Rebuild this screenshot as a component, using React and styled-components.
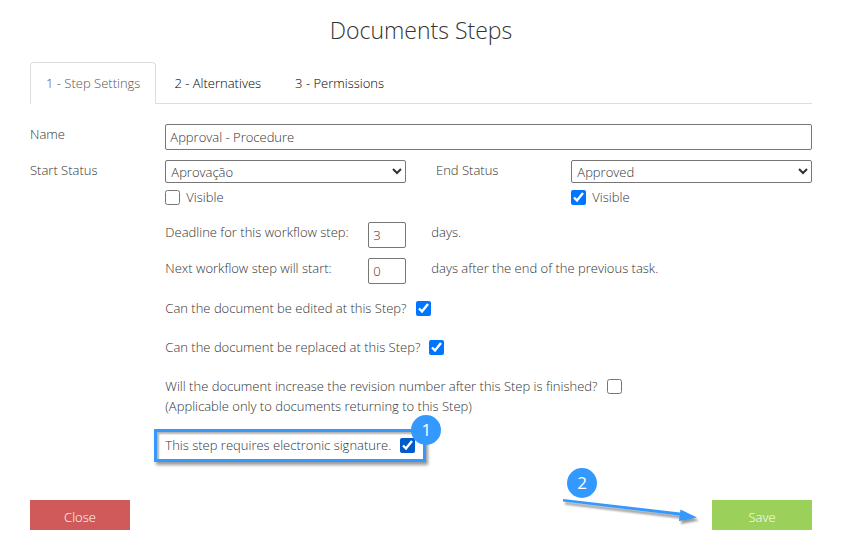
import React from "react";
import styled, { createGlobalStyle } from "styled-components";

const GlobalStyle = createGlobalStyle`
  * {
    box-sizing: border-box;
  }
  body {
    margin: 0;
    background: #fff;
    color: #333;
    font-family: "Open Sans", "Noto Sans", sans-serif;
    font-size: 13px;
    font-weight: 300;
    line-height: 20px;
  }
  input,
  select,
  button {
    font: inherit;
    color: inherit;
  }
`;

const tabs = ["1 - Step Settings", "2 - Alternatives", "3 - Permissions"];

const App = () => {
  return (
    <Page>
      <GlobalStyle />
      <Title>Documents Steps</Title>
      <Tabs>
        {tabs.map((tab, i) => (
          <Tab key={tab} href="#" $active={i === 0}>
            {tab}
          </Tab>
        ))}
      </Tabs>

      <Form>
        <Row>
          <Label htmlFor="name">Name</Label>
          <WideField>
            <TextInput id="name" defaultValue="Approval - Procedure" />
          </WideField>
        </Row>
        <Row>
          <Label htmlFor="start">Start Status</Label>
          <div>
            <Select id="start">
              <option>Aprovação</option>
            </Select>
            <CheckLabel>
              <Checkbox type="checkbox" />
              Visible
            </CheckLabel>
          </div>
          <Label htmlFor="end">End Status</Label>
          <div>
            <Select id="end">
              <option>Approved</option>
            </Select>
            <CheckLabel>
              <Checkbox type="checkbox" defaultChecked />
              Visible
            </CheckLabel>
          </div>
        </Row>
        <Row>
          <Options>
            <DaysRow>
              <Label htmlFor="deadline">Deadline for this workflow step:</Label>
              <TextInput id="deadline" defaultValue="3" />
              <span>days.</span>
            </DaysRow>
            <DaysRow>
              <Label htmlFor="next">Next workflow step will start:</Label>
              <TextInput id="next" defaultValue="0" />
              <span>days after the end of the previous task.</span>
            </DaysRow>
            <Questions>
              <Question>
                Can the document be edited at this Step?
                <Checkbox type="checkbox" defaultChecked />
              </Question>
              <Question>
                Can the document be replaced at this Step?
                <Checkbox type="checkbox" defaultChecked />
              </Question>
              <div>
                <Question>
                  Will the document increase the revision number after this Step
                  is finished?
                  <Checkbox type="checkbox" />
                </Question>
                <div>(Applicable only to documents returning to this Step)</div>
              </div>
              <Highlight>
                <Question>
                  This step requires electronic signature.
                  <Checkbox type="checkbox" defaultChecked $dark />
                </Question>
                <CornerBadge>1</CornerBadge>
              </Highlight>
            </Questions>
          </Options>
        </Row>
      </Form>

      <Footer>
        <Button $color="#d05a5a">Close</Button>
        <SaveBox>
          <Arrow width="150" height="40" viewBox="0 0 150 40">
            <path
              d="M1 9 L1 11.5 L117.500 25.500 L117 31 L135 27.500 L118.500 19.500 L118 22.500 Z"
              fill="#3399ff"
            />
          </Arrow>
          <ArrowBadge>2</ArrowBadge>
          <Button $color="#9bd15a">Save</Button>
        </SaveBox>
      </Footer>
    </Page>
  );
};

const Page = styled.main`
  padding: 12px 29px 13px 30px;
`;

const Title = styled.h1`
  margin: 0 0 14px;
  font-size: 23px;
  font-weight: 300;
  line-height: 36px;
  text-align: center;
`;

const Tabs = styled.nav`
  display: flex;
  gap: 2px;
  border-bottom: 1px solid #ddd;
`;

const Tab = styled.a`
  margin-bottom: -1px;
  padding: 10px 15px;
  border: 1px solid ${(p) => (p.$active ? "#ddd" : "transparent")};
  border-bottom-color: ${(p) => (p.$active ? "#fff" : "transparent")};
  border-radius: 4px 4px 0 0;
  color: ${(p) => (p.$active ? "#555" : "#000")};
  text-decoration: none;
`;

const Form = styled.form`
  display: grid;
  gap: 10px;
  padding-top: 20px;
`;

const Row = styled.div`
  display: grid;
  grid-template-columns: 2fr 4fr 2fr 4fr;
  margin-right: -30px;

  > * {
    margin-right: 30px;
    min-width: 0;
  }
`;

const Label = styled.label`
  color: #333;
`;

const WideField = styled.div`
  grid-column: 2 / -1;
`;

const TextInput = styled.input`
  display: block;
  width: 100%;
  height: 26px;
  padding: 2px 4px;
  border: 1px solid #767676;
  border-radius: 2px;
`;

const Select = styled.select`
  display: block;
  width: 100%;
  height: 23px;
  padding-left: 1px;
  border: 1px solid #767676;
  border-radius: 2px;
  background: #fff;
`;

const CheckLabel = styled.label`
  display: flex;
  align-items: center;
  gap: 6px;
  margin-top: 4px;
`;

const Checkbox = styled.input`
  width: 15px;
  height: 15px;
  margin: 0;
  accent-color: ${(p) => (p.$dark ? "#005cc8" : "auto")};
`;

const Options = styled.div`
  grid-column: 2 / -1;
  display: grid;
  gap: 10px;
  padding-top: 5px;
`;

const DaysRow = styled.div`
  display: grid;
  grid-template-columns: 203px 38px 1fr;

  span {
    padding-left: 25px;
  }
`;

const Questions = styled.div`
  display: grid;
  gap: 19px;
  padding-top: 4px;
`;

const Question = styled.label`
  display: flex;
  align-items: center;
  gap: 9px;
`;

const Highlight = styled.div`
  position: relative;
  justify-self: start;
  margin: -6px -11px -7px;
  padding: 3px 8px 4px;
  border: 3px solid #3399ff;
  box-shadow: 2px 3px 3px rgba(0, 0, 0, 0.4),
    inset 2px 2px 2px rgba(0, 0, 0, 0.3);
`;

const Badge = styled.span`
  position: absolute;
  width: 30px;
  height: 30px;
  border-radius: 50%;
  background: #3399ff;
  color: #fff;
  font-size: 17px;
  font-weight: 400;
  line-height: 30px;
  text-align: center;
`;

const CornerBadge = styled(Badge)`
  top: -17px;
  right: -18px;
`;

const ArrowBadge = styled(Badge)`
  top: -32px;
  right: 215px;
`;

const Footer = styled.footer`
  display: flex;
  justify-content: space-between;
  margin-top: 45px;
`;

const SaveBox = styled.div`
  position: relative;
`;

const Arrow = styled.svg`
  position: absolute;
  top: -10px;
  right: 100px;
  filter: drop-shadow(2px 3px 1px rgba(0, 0, 0, 0.4));
`;

const Button = styled.button`
  display: block;
  width: 100px;
  height: 30px;
  padding: 4px 0 0;
  border: 0;
  background: ${(p) => p.$color};
  color: #fff;
`;

export default App;
